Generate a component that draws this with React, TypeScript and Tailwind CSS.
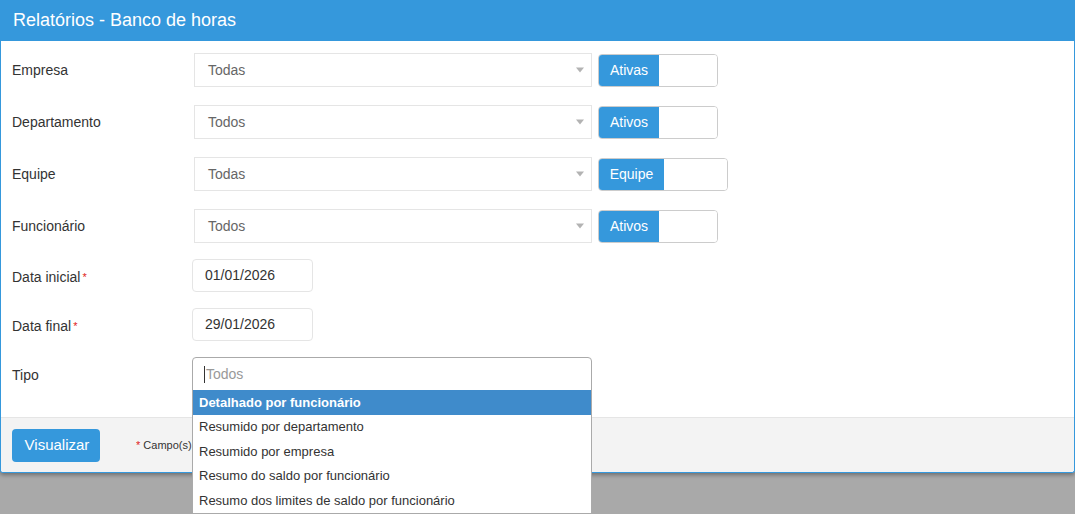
import React from 'react'

const font = { fontFamily: '"Liberation Sans", Arial, sans-serif' }

function Caret() {
  return <span className="absolute right-[7px] top-1/2 -translate-y-1/2 h-0 w-0 border-x-[4px] border-t-[5px] border-x-transparent border-t-[#b3b3b3]" />
}

function SelectRow({ label, value, toggle, wide }: { label: string; value: string; toggle: string; wide?: boolean }) {
  return (
    <div className="flex items-center h-[34px]">
      <div className="w-[182px] text-[14px] text-[#333]">{label}</div>
      <div className="relative flex items-center w-[398px] h-[34px] border border-[#e5e5e5] pl-[13px] text-[14px] text-[#666]">
        {value}
        <Caret />
      </div>
      <div className={`ml-[6px] mt-[1px] flex h-[33px] overflow-hidden rounded-[4px] border border-[#ccc] ${wide ? 'w-[130px]' : 'w-[120px]'}`}>
        <div className={`flex items-center justify-center bg-[#3598dc] text-[14px] text-white ${wide ? 'w-[65px]' : 'w-[60px]'}`}>{toggle}</div>
        <div className="flex-1 bg-white" />
      </div>
    </div>
  )
}

function DateRow({ label, value }: { label: string; value: string }) {
  return (
    <div className="flex items-center h-[33px]">
      <div className="flex items-center w-[180px] pt-[3px] text-[14px] text-[#333]">
        {label}
        <span className="ml-[2px] text-[11px] leading-none text-[#e02222]">*</span>
      </div>
      <div className="flex items-center w-[121px] h-[33px] rounded-[4px] border border-[#e5e5e5] pl-[12px] text-[14px] text-[#333]">
        {value}
      </div>
    </div>
  )
}

const options = [
  'Detalhado por funcionário',
  'Resumido por departamento',
  'Resumido por empresa',
  'Resumo do saldo por funcionário',
  'Resumo dos limites de saldo por funcionário',
]

export default function App() {
  return (
    <div className="h-[514px] overflow-hidden bg-[#a9a9a9]" style={font}>
      <div className="relative border border-t-0 border-[#3598dc] rounded-b-[3px] bg-white shadow-[0_2px_4px_rgba(0,0,0,0.35)]">
        <div className="flex items-center h-[41px] bg-[#3598dc] px-[12px] text-[18px] text-white">
          Relatórios - Banco de horas
        </div>
        <div className="flex flex-col px-[11px] pt-[12px] pb-[26px]">
          <SelectRow label="Empresa" value="Todas" toggle="Ativas" />
          <div className="mt-[18px]"><SelectRow label="Departamento" value="Todos" toggle="Ativos" /></div>
          <div className="mt-[18px]"><SelectRow label="Equipe" value="Todas" toggle="Equipe" wide /></div>
          <div className="mt-[18px]"><SelectRow label="Funcionário" value="Todos" toggle="Ativos" /></div>
          <div className="mt-[16px]"><DateRow label="Data inicial" value="01/01/2026" /></div>
          <div className="mt-[16px]"><DateRow label="Data final" value="29/01/2026" /></div>
          <div className="mt-[16px] flex items-center h-[34px]">
            <div className="w-[180px] pt-[2px] text-[14px] text-[#333]">Tipo</div>
            <div className="relative w-[400px]">
              <div className="flex items-center h-[34px] rounded-t-[4px] border border-[#aaa] pl-[11px] text-[14px] text-[#999]">
                <span className="mr-[1px] h-[17px] w-[1px] bg-[#333]" />
                Todos
              </div>
              <div className="absolute left-0 top-[33px] z-10 w-[400px] border border-t-0 border-[#aaa] bg-white">
                {options.map((o, i) => (
                  <div
                    key={o}
                    className={`flex items-center h-[24.6px] px-[6px] text-[13px] ${i === 0 ? 'bg-[#3f8bcb] font-bold text-white' : 'text-[#333]'}`}
                  >
                    {o}
                  </div>
                ))}
              </div>
            </div>
          </div>
        </div>
        <div className="flex items-center h-[55px] border-t border-[#e5e5e5] bg-[#f3f3f3] px-[11px] rounded-b-[3px]">
          <button className="h-[33px] w-[88px] rounded-[4px] bg-[#3598dc] pl-[2px] text-[15px] text-white">Visualizar</button>
          <div className="ml-[36px] w-[56px] overflow-hidden whitespace-nowrap text-[11px] text-[#333]">
            <span className="text-[#e02222]">*</span> Campo(s) obrigatório(s)
          </div>
        </div>
      </div>
    </div>
  )
}
